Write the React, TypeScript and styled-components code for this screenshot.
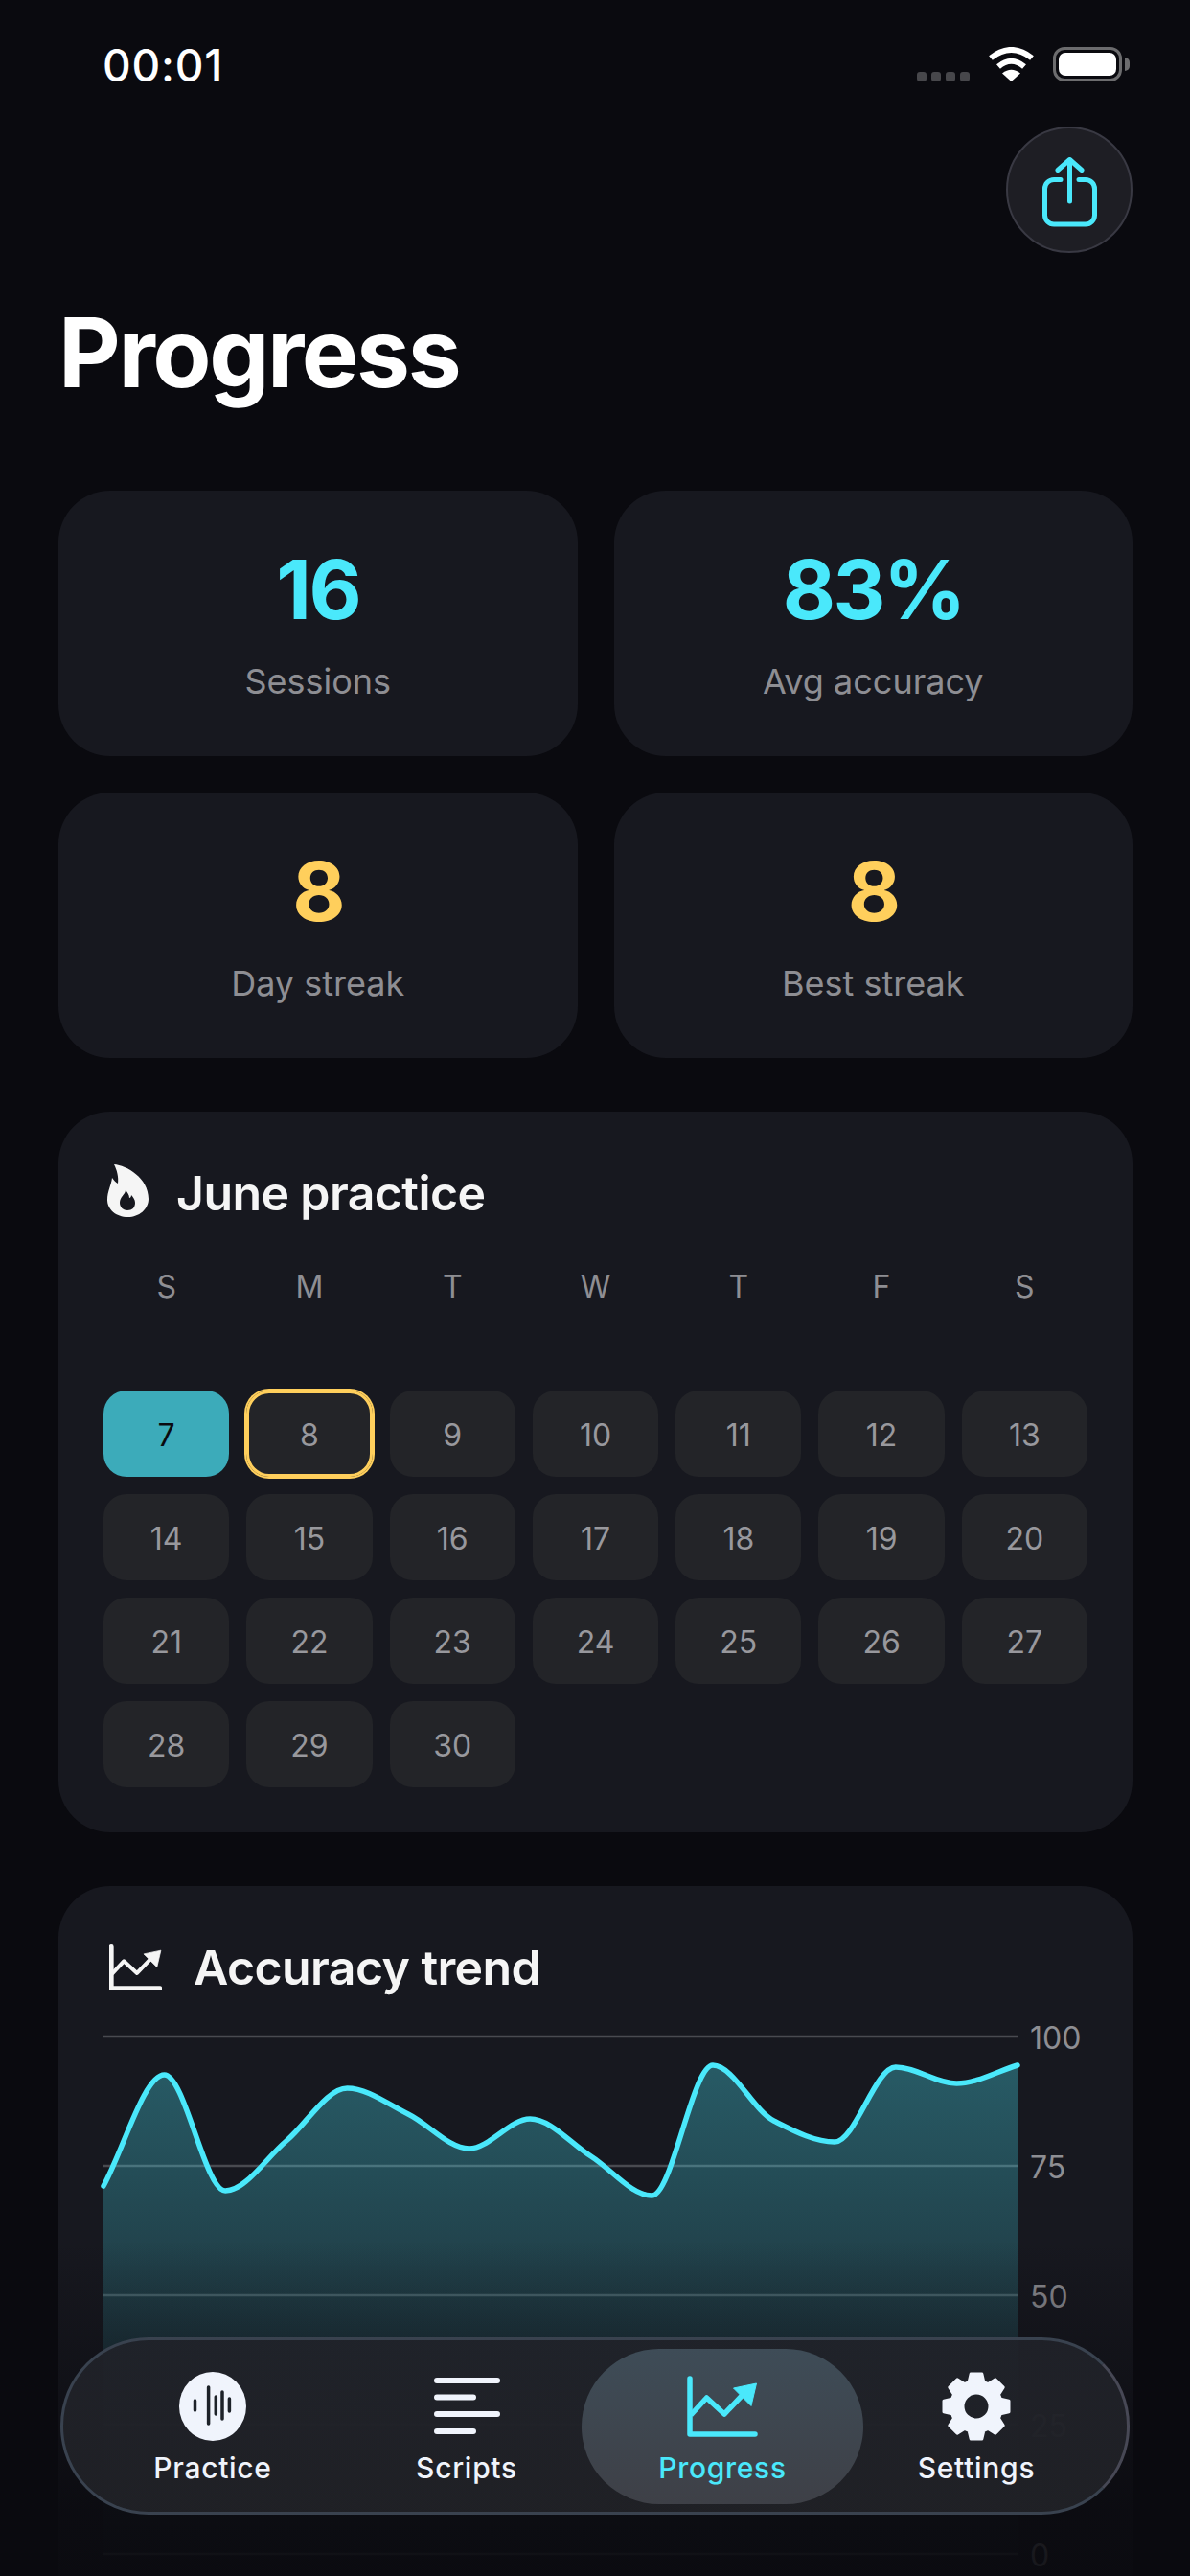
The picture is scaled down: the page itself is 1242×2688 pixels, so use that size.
import React from 'react'
import styled, { createGlobalStyle } from 'styled-components'

const CYAN = '#4ae8fb'
const YELLOW = '#ffcf5c'
const GREY = '#8e8e93'

const GlobalStyle = createGlobalStyle`
    html, body {
        margin: 0;
        padding: 0;
        background: #0a0a0f;
    }
    * {
        box-sizing: border-box;
    }
`

const Screen = styled.div`
    position: relative;
    width: 1242px;
    height: 2688px;
    overflow: hidden;
    background: #0a0a0f;
    color: #fff;
    font-family: Inter, 'Liberation Sans', sans-serif;
`

const StatusBar = styled.header`
    display: flex;
    justify-content: space-between;
    align-items: flex-start;
    height: 132px;
    padding: 40px 64px 0 107px;
`

const Time = styled.div`
    font-size: 46px;
    line-height: 56px;
    font-weight: 500;
    letter-spacing: 0.8px;
`

const StatusIcons = styled.div`
    display: flex;
    align-items: flex-end;
    margin-top: 9px;
`

const SignalDots = styled.div`
    display: flex;
    gap: 5px;
    margin-right: 20px;
`

const SignalDot = styled.span`
    width: 10px;
    height: 10px;
    border-radius: 3px;
    background: #47474b;
`

const WifiIcon = styled.svg`
    display: block;
    margin-right: 20px;
`

const Battery = styled.div`
    position: relative;
    width: 72px;
    height: 36px;
    padding: 3px;
    border: 3px solid #6c6c6e;
    border-radius: 12px;
    margin-right: 7px;
    &::after {
        content: '';
        position: absolute;
        right: -11px;
        top: 8px;
        width: 5px;
        height: 14px;
        border-radius: 0 5px 5px 0;
        background: #6c6c6e;
    }
`

const BatteryFill = styled.div`
    width: 100%;
    height: 100%;
    border-radius: 7px;
    background: #fff;
`

const ActionRow = styled.div`
    display: flex;
    justify-content: flex-end;
    padding: 0 60px;
`

const ShareButton = styled.button`
    display: flex;
    align-items: center;
    justify-content: center;
    width: 132px;
    height: 132px;
    padding: 5px 0 0;
    border: 2px solid #393943;
    border-radius: 50%;
    background: #1e1e24;
`

const Title = styled.h1`
    margin: 44px 0 84px;
    padding-left: 61px;
    font-size: 100px;
    line-height: 120px;
    font-weight: 700;
    letter-spacing: -2.4px;
`

const Content = styled.main`
    display: flex;
    flex-direction: column;
    gap: 56px;
    padding: 0 60px 0 61px;
`

const StatsGrid = styled.section`
    display: grid;
    grid-template-columns: 1fr 1fr;
    grid-auto-rows: 277px;
    gap: 38px;
`

const StatCard = styled.div`
    display: flex;
    flex-direction: column;
    align-items: center;
    padding-top: 52px;
    border-radius: 54px;
    background: #17181f;
`

const StatValue = styled.div<{ $color: string }>`
    font-size: 85px;
    line-height: 104px;
    font-weight: 700;
    letter-spacing: -2.5px;
    color: ${p => p.$color};
`

const StatLabel = styled.div`
    margin-top: 21px;
    font-size: 36px;
    line-height: 44px;
    color: ${GREY};
`

const Panel = styled.section`
    padding: 47px;
    border-radius: 54px;
    background: #17181f;
`

const PanelHeader = styled.div`
    display: flex;
    align-items: center;
    height: 76px;
    font-size: 50px;
    font-weight: 600;
    letter-spacing: -0.6px;
    color: #f5f5f5;
`

const FlameIcon = styled.svg`
    display: block;
    margin: -5px 29px 0 4px;
`

const TitleTrendIcon = styled.svg`
    display: block;
    margin: 0 33px 0 6px;
`

const WeekRow = styled.div`
    display: grid;
    grid-template-columns: repeat(7, 1fr);
    column-gap: 18px;
    margin-top: 40px;
`

const WeekDay = styled.div`
    text-align: center;
    font-size: 32px;
    line-height: 40px;
    color: ${GREY};
`

const DayGrid = styled.div`
    display: grid;
    grid-template-columns: repeat(7, 1fr);
    grid-auto-rows: 90px;
    gap: 18px;
    margin-top: 88px;
`

const Day = styled.div<{ $done?: boolean; $today?: boolean }>`
    display: flex;
    align-items: center;
    justify-content: center;
    padding-top: 2px;
    border-radius: 24px;
    font-size: 32px;
    background: ${p => (p.$done ? '#3cabba' : '#232428')};
    color: ${p => (p.$done ? '#0a0a0f' : '#98989d')};
    box-shadow: ${p => (p.$today ? `0 0 0 2px ${YELLOW}, inset 0 0 0 3px ${YELLOW}` : 'none')};
`

const Chart = styled.div`
    display: flex;
    margin-top: 34px;
`

const Plot = styled.svg`
    display: block;
    flex: none;
    overflow: visible;
`

const Axis = styled.div`
    display: flex;
    flex-direction: column;
    justify-content: space-between;
    height: 580px;
    margin: -18px 0 0 13px;
`

const AxisLabel = styled.span`
    font-size: 32px;
    line-height: 40px;
    color: ${GREY};
`

const BottomFade = styled.div`
    position: absolute;
    left: 0;
    right: 0;
    bottom: 0;
    height: 350px;
    background: linear-gradient(to bottom, rgba(10, 10, 15, 0), rgba(10, 10, 15, 0.86) 80%, rgba(10, 10, 15, 0.9));
`

const TabBar = styled.nav`
    position: absolute;
    left: 63px;
    top: 2439px;
    display: grid;
    grid-template-columns: 290px 240px 294px 236px;
    align-items: center;
    width: 1116px;
    height: 185px;
    padding: 0 11px;
    border: 3px solid #39424f;
    border-right-color: #474855;
    border-radius: 92px;
    background: linear-gradient(to bottom, rgba(32, 34, 41, 0.92), rgba(32, 33, 38, 0.97));
`

const Tab = styled.div<{ $active?: boolean }>`
    display: flex;
    flex-direction: column;
    align-items: center;
    height: 162px;
    padding-top: 24px;
    border-radius: 81px;
    background: ${p => (p.$active ? 'linear-gradient(to bottom, #3e4c57, #3e4047)' : 'none')};
    color: ${p => (p.$active ? CYAN : '#f0f4fc')};
`

const TabIcon = styled.svg`
    display: block;
    height: 72px;
    margin-bottom: 10px;
`

const TabLabel = styled.span`
    font-size: 30px;
    line-height: 36px;
    font-weight: 500;
    letter-spacing: 0.7px;
`

const WEEK = ['S', 'M', 'T', 'W', 'T', 'F', 'S']
const DAYS = Array.from({ length: 24 }, (_, i) => i + 7)
const STATS = [
    { value: '16', label: 'Sessions', color: CYAN },
    { value: '83%', label: 'Avg accuracy', color: CYAN },
    { value: '8', label: 'Day streak', color: YELLOW },
    { value: '8', label: 'Best streak', color: YELLOW },
]

// y of each session, measured from the 100 gridline
const SESSIONS = [156, 40, 161, 109, 54, 81, 117, 86, 125, 166, 30, 88, 110, 32, 49, 30]
const PLOT_W = 954
const PLOT_H = 540
const STEP = PLOT_W / (SESSIONS.length - 1)

// monotone cubic through the points, so peaks stay on the data
const linePath = () => {
    const n = SESSIONS.length
    const slopes = SESSIONS.slice(1).map((y, i) => (y - SESSIONS[i]) / STEP)
    const tangents = SESSIONS.map((_, i) => {
        if (i === 0) return slopes[0]
        if (i === n - 1) return slopes[n - 2]
        const a = slopes[i - 1]
        const b = slopes[i]
        if (a * b <= 0) return 0
        return (2 * a * b) / (a + b)
    })
    let d = `M0 ${SESSIONS[0]}`
    for (let i = 1; i < n; i++) {
        const x0 = (i - 1) * STEP
        const x1 = i * STEP
        const c = STEP / 3
        d += ` C${x0 + c} ${SESSIONS[i - 1] + tangents[i - 1] * c} ${x1 - c} ${SESSIONS[i] - tangents[i] * c} ${x1} ${SESSIONS[i]}`
    }
    return d
}

const gearPath = () => {
    const cx = 36
    const cy = 36
    let d = ''
    for (let i = 0; i < 8; i++) {
        const t = (i * Math.PI) / 4 - Math.PI / 2
        const pts = [
            [26.5, t - 0.3],
            [34.5, t - 0.17],
            [34.5, t + 0.17],
            [26.5, t + 0.3],
        ]
        pts.forEach(([r, a], j) => {
            const cmd = i === 0 && j === 0 ? 'M' : 'L'
            d += `${cmd}${(cx + r * Math.cos(a)).toFixed(2)} ${(cy + r * Math.sin(a)).toFixed(2)} `
        })
    }
    return `${d}Z M36 22 A14 14 0 1 0 36 50 A14 14 0 1 0 36 22 Z`
}

const TREND_AXIS = 'M3 3 V61 H71'
const TREND_LINE = 'M4 41 L20.5 23 L39 40 L58 20'
const TREND_HEAD = 'M72.5 8 L48.5 13 L67 31.5 Z'

export default function App() {
    const line = linePath()
    return (
        <Screen>
            <GlobalStyle />
            <StatusBar>
                <Time>00:01</Time>
                <StatusIcons>
                    <SignalDots>
                        {[0, 1, 2, 3].map(i => (
                            <SignalDot key={i} />
                        ))}
                    </SignalDots>
                    <WifiIcon width="47" height="36" viewBox="0 0 47 36">
                        <path d="M2 11.5 Q23.5 -5.5 45 11.5" fill="none" stroke="#fff" strokeWidth="6" />
                        <path d="M10 20.5 Q23.5 9 37 20.5" fill="none" stroke="#fff" strokeWidth="6" />
                        <path d="M23.5 36 L14 27.5 Q23.5 20 33 27.5 Z" fill="#fff" />
                    </WifiIcon>
                    <Battery>
                        <BatteryFill />
                    </Battery>
                </StatusIcons>
            </StatusBar>

            <ActionRow>
                <ShareButton>
                    <svg width="57" height="74" viewBox="0 0 57 74" fill="none" stroke={CYAN} strokeWidth="5" strokeLinecap="round" strokeLinejoin="round">
                        <path d="M19 23.5 H12 A9.5 9.5 0 0 0 2.5 33 V60.5 A9.5 9.5 0 0 0 12 70 H45 A9.5 9.5 0 0 0 54.5 60.5 V33 A9.5 9.5 0 0 0 45 23.5 H38" />
                        <path d="M28.5 46 V3 M16 13.5 L28.5 2.5 L41 13.5" />
                    </svg>
                </ShareButton>
            </ActionRow>

            <Title>Progress</Title>

            <Content>
                <StatsGrid>
                    {STATS.map(s => (
                        <StatCard key={s.label}>
                            <StatValue $color={s.color}>{s.value}</StatValue>
                            <StatLabel>{s.label}</StatLabel>
                        </StatCard>
                    ))}
                </StatsGrid>

                <Panel>
                    <PanelHeader>
                        <FlameIcon width="43" height="55" viewBox="0 0 43 55">
                            <path
                                fillRule="evenodd"
                                fill="#f5f5f5"
                                d="M7 0 C20 1 43 14 43 36 C43 47 33 55 21.5 55 C9 55 0 47 0 37 C0 28 4 22 5 14 C7 17 9 19 11 20 C12 13 10 6 7 0 Z M19 27 C19 31 13 34 13 40 C13 45 17 48 21 48 C26 48 29 45 29 40 C29 37 27 34 25 32 C25 34 24 35 23 35 C23 32 21 29 19 27 Z"
                            />
                        </FlameIcon>
                        June practice
                    </PanelHeader>
                    <WeekRow>
                        {WEEK.map((d, i) => (
                            <WeekDay key={i}>{d}</WeekDay>
                        ))}
                    </WeekRow>
                    <DayGrid>
                        {DAYS.map(d => (
                            <Day key={d} $done={d === 7} $today={d === 8}>
                                {d}
                            </Day>
                        ))}
                    </DayGrid>
                </Panel>

                <Panel>
                    <PanelHeader>
                        <TitleTrendIcon width="55" height="48" viewBox="0 0 74 64">
                            <path d={TREND_AXIS} fill="none" stroke="#f5f5f5" strokeWidth="6.5" strokeLinecap="round" strokeLinejoin="round" />
                            <path d={TREND_LINE} fill="none" stroke="#f5f5f5" strokeWidth="5.5" strokeLinejoin="round" />
                            <path d={TREND_HEAD} fill="#f5f5f5" stroke="#f5f5f5" strokeWidth="1" strokeLinejoin="round" />
                        </TitleTrendIcon>
                        Accuracy trend
                    </PanelHeader>
                    <Chart>
                        <Plot width={PLOT_W} height={PLOT_H} viewBox={`0 0 ${PLOT_W} ${PLOT_H}`}>
                            <defs>
                                <linearGradient id="trendFill" x1="0" y1="30" x2="0" y2={PLOT_H} gradientUnits="userSpaceOnUse">
                                    <stop offset="0" stopColor={CYAN} stopOpacity="0.32" />
                                    <stop offset="1" stopColor={CYAN} stopOpacity="0.02" />
                                </linearGradient>
                            </defs>
                            {[0, 135, 270, 405, 540].map(y => (
                                <line key={y} x1="0" x2={PLOT_W} y1={y} y2={y} stroke="#fff" strokeOpacity="0.22" strokeWidth="2.5" />
                            ))}
                            <path d={`${line} L${PLOT_W} ${PLOT_H} L0 ${PLOT_H} Z`} fill="url(#trendFill)" />
                            <path d={line} fill="none" stroke={CYAN} strokeWidth="5.5" strokeLinecap="round" />
                        </Plot>
                        <Axis>
                            {[100, 75, 50, 25, 0].map(v => (
                                <AxisLabel key={v}>{v}</AxisLabel>
                            ))}
                        </Axis>
                    </Chart>
                </Panel>
            </Content>

            <BottomFade />

            <TabBar>
                <Tab>
                    <TabIcon width="70" viewBox="0 0 70 72">
                        <ellipse cx="35" cy="36" rx="35" ry="36" fill="currentColor" />
                        <path
                            d="M16.5 30 V40 M30.6 16 V54 M38.3 26 V44 M45 21 V49 M52.4 28 V41"
                            fill="none"
                            stroke="#1d2229"
                            strokeWidth="3.5"
                            strokeLinecap="round"
                        />
                    </TabIcon>
                    <TabLabel>Practice</TabLabel>
                </Tab>
                <Tab>
                    <TabIcon width="69" viewBox="0 0 69 72">
                        <path d="M3 9 H66 M3 26.5 H41 M3 44 H66 M3 62 H41" fill="none" stroke="currentColor" strokeWidth="6" strokeLinecap="round" />
                    </TabIcon>
                    <TabLabel>Scripts</TabLabel>
                </Tab>
                <Tab $active>
                    <TabIcon width="74" viewBox="0 0 74 72">
                        <g transform="translate(0 4)">
                            <path d={TREND_AXIS} fill="none" stroke="currentColor" strokeWidth="5.5" strokeLinecap="round" strokeLinejoin="round" />
                            <path d={TREND_LINE} fill="none" stroke="currentColor" strokeWidth="5.5" strokeLinejoin="round" />
                            <path d={TREND_HEAD} fill="currentColor" stroke="currentColor" strokeWidth="1" strokeLinejoin="round" />
                        </g>
                    </TabIcon>
                    <TabLabel>Progress</TabLabel>
                </Tab>
                <Tab>
                    <TabIcon width="72" viewBox="0 0 72 72">
                        <path d={gearPath()} fillRule="evenodd" fill="currentColor" stroke="currentColor" strokeWidth="3" strokeLinejoin="round" />
                    </TabIcon>
                    <TabLabel>Settings</TabLabel>
                </Tab>
            </TabBar>
        </Screen>
    )
}
